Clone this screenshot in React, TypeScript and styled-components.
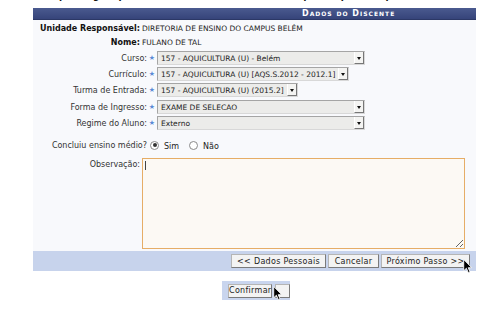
import React from 'react';
import styled, { createGlobalStyle } from 'styled-components';

const GlobalStyle = createGlobalStyle`
  html, body { margin: 0; padding: 0; background: #fff; }
  body { font-family: "DejaVu Sans", Verdana, sans-serif; font-size: 8px; color: #222; }
`;

const Page = styled.div`
  position: relative;
  width: 504px;
  height: 311px;
  overflow: hidden;
  background: #fff;
`;

const TopNote = styled.div`
  height: 2px;
  overflow: hidden;
  padding-left: 33px;
  font-size: 9px;
  font-weight: bold;
  line-height: 9px;
  color: #111;
  & > span { display: block; margin-top: -8px; }
`;

const Panel = styled.div`
  margin: 6px 0 0 33px;
  width: 443px;
`;

const Header = styled.div`
  height: 11px;
  line-height: 11px;
  padding-left: 269px;
  background: linear-gradient(#4a5a8f, #36447a);
  border-bottom: 1px solid #2c3866;
  color: #fff;
  font-weight: bold;
  font-size: 8px;
  font-variant: small-caps;
  letter-spacing: 1px;
`;

const Body = styled.div`
  background: #f8f9fc;
  padding: 1px 0 2px;
`;

const Row = styled.div<{ $h: number; $mt?: number }>`
  display: flex;
  align-items: center;
  height: ${p => p.$h}px;
  margin-top: ${p => p.$mt ?? 0}px;
`;

const Label = styled.div<{ $w?: number; $bold?: boolean }>`
  width: ${p => p.$w ?? 114}px;
  flex: none;
  text-align: right;
  font-weight: ${p => (p.$bold ? 'bold' : 'normal')};
  color: ${p => (p.$bold ? '#111' : '#333')};
  white-space: nowrap;
`;

const Value = styled.div`
  margin-left: 2px;
  font-size: 7.5px;
  color: #222;
`;

const Star = styled.span`
  width: 10px;
  flex: none;
  text-align: center;
  color: #5b8ad6;
  font-size: 7px;
`;

const Select = styled.div<{ $w: number }>`
  width: ${p => p.$w}px;
  height: 14px;
  box-sizing: border-box;
  display: flex;
  align-items: center;
  background: #ececea;
  border: 1px solid #a5a5a5;
  border-right-color: #d8d8d8;
  border-bottom-color: #d8d8d8;
  padding-left: 3px;
  font-size: 7.5px;
  color: #222;
  white-space: nowrap;
  overflow: hidden;
`;

const SelectText = styled.span`
  flex: 1;
  overflow: hidden;
`;

const Arrow = styled.span`
  flex: none;
  width: 10px;
  height: 12px;
  box-sizing: border-box;
  background: #f4f4f2;
  border-left: 1px solid #fff;
  border-right: 1px solid #777;
  border-bottom: 1px solid #777;
  display: flex;
  align-items: center;
  justify-content: center;
  &::after {
    content: '';
    border-left: 2.5px solid transparent;
    border-right: 2.5px solid transparent;
    border-top: 3px solid #111;
    margin-top: 1px;
  }
`;

const Radios = styled.div`
  display: flex;
  align-items: center;
  margin-left: 3px;
`;

const Radio = styled.span<{ $on?: boolean }>`
  width: 9px;
  height: 9px;
  box-sizing: border-box;
  border-radius: 50%;
  border: 1px solid #8a8a8a;
  background: #fff;
  display: inline-flex;
  align-items: center;
  justify-content: center;
  &::after {
    content: '';
    width: 4px;
    height: 4px;
    border-radius: 50%;
    background: ${p => (p.$on ? '#333' : 'transparent')};
  }
`;

const RadioText = styled.span`
  margin: 3px 10px 0 5px;
  color: #222;
`;

const ObsRow = styled.div`
  display: flex;
  align-items: flex-start;
  margin-top: 5px;
`;

const ObsLabel = styled(Label)`
  padding-top: 2px;
`;

const AreaWrap = styled.div`
  position: relative;
  margin-left: 2px;
  line-height: 0;
`;

const Area = styled.textarea`
  width: 323px;
  height: 91px;
  box-sizing: border-box;
  margin: 0;
  padding: 2px;
  border: 1px solid #e6ad66;
  background: #fcf9f4;
  font-family: inherit;
  font-size: 8px;
  outline: none;
  resize: both;
`;

const Caret = styled.span`
  position: absolute;
  left: 3px;
  top: 3px;
  width: 1px;
  height: 9px;
  background: #444;
`;

const ButtonBar = styled.div`
  height: 20px;
  background: #c7d3ec;
  display: flex;
  align-items: center;
  justify-content: flex-end;
  gap: 2px;
  padding-right: 6px;
`;

const Button = styled.span<{ $w: number }>`
  width: ${p => p.$w}px;
  height: 14px;
  box-sizing: border-box;
  display: inline-flex;
  align-items: center;
  justify-content: center;
  background: #f3f3f3;
  border: 1px solid #b5b5b5;
  border-right-color: #7a7a7a;
  border-bottom-color: #7a7a7a;
  color: #222;
  letter-spacing: 0.3px;
  white-space: nowrap;
`;

const ConfirmStrip = styled.div`
  margin: 10px 0 0 222px;
  width: 68px;
  height: 19px;
  background: #c9d5ee;
  display: flex;
  align-items: center;
  gap: 3px;
  padding-left: 6px;
  box-sizing: border-box;
  overflow: hidden;
`;

const Cursor = styled.svg<{ $x: number; $y: number }>`
  position: absolute;
  left: ${p => p.$x}px;
  top: ${p => p.$y}px;
  width: 10px;
  height: 15px;
`;

const Pointer = ({ x, y }: { x: number; y: number }) => (
  <Cursor $x={x} $y={y} viewBox="0 0 9 14">
    <path d="M0.5 0.5 L0.5 11 L3 8.6 L4.8 12.8 L6.4 12.1 L4.7 8.1 L8 8.1 Z" fill="#000" stroke="#fff" strokeWidth="0.8" />
  </Cursor>
);

const selects = [
  { label: 'Curso:', text: '157 - AQUICULTURA (U) - Belém', w: 208 },
  { label: 'Currículo:', text: '157 - AQUICULTURA (U) [AQS.S.2012 - 2012.1]', w: 192 },
  { label: 'Turma de Entrada:', text: '157 - AQUICULTURA (U) (2015.2]', w: 141 },
];

export default function App() {
  return (
    <Page>
      <GlobalStyle />
      <TopNote>
        <span>Para prosseguir, preencha os dados do discente e clique em próximo passo.</span>
      </TopNote>
      <Panel>
        <Header>Dados do Discente</Header>
        <Body>
          <Row $h={14}>
            <Label $w={107} $bold>Unidade Responsável:</Label>
            <Value>DIRETORIA DE ENSINO DO CAMPUS BELÉM</Value>
          </Row>
          <Row $h={14}>
            <Label $w={107} $bold>Nome:</Label>
            <Value>FULANO DE TAL</Value>
          </Row>
          {selects.map((s, i) => (
            <Row key={s.label} $h={16} $mt={i === 0 ? 1 : 0}>
              <Label>{s.label}</Label>
              <Star>★</Star>
              <Select $w={s.w}>
                <SelectText>{s.text}</SelectText>
                <Arrow />
              </Select>
            </Row>
          ))}
          <Row $h={16} $mt={1}>
            <Label>Forma de Ingresso:</Label>
            <Star>★</Star>
            <Select $w={208}>
              <SelectText>EXAME DE SELECAO</SelectText>
              <Arrow />
            </Select>
          </Row>
          <Row $h={16}>
            <Label>Regime do Aluno:</Label>
            <Star>★</Star>
            <Select $w={208}>
              <SelectText>Externo</SelectText>
              <Arrow />
            </Select>
          </Row>
          <Row $h={16} $mt={6}>
            <Label>Concluiu ensino médio?</Label>
            <Radios>
              <Radio $on />
              <RadioText>Sim</RadioText>
              <Radio />
              <RadioText>Não</RadioText>
            </Radios>
          </Row>
          <ObsRow>
            <ObsLabel $w={107}>Observação:</ObsLabel>
            <AreaWrap>
              <Area defaultValue="" />
              <Caret />
            </AreaWrap>
          </ObsRow>
        </Body>
        <ButtonBar>
          <Button $w={95}>&lt;&lt; Dados Pessoais</Button>
          <Button $w={51}>Cancelar</Button>
          <Button $w={89}>Próximo Passo &gt;&gt;</Button>
        </ButtonBar>
      </Panel>
      <ConfirmStrip>
        <Button $w={50}>Confirmar</Button>
        <Button $w={20} />
      </ConfirmStrip>
      <Pointer x={463} y={259} />
      <Pointer x={273} y={286} />
    </Page>
  );
}
